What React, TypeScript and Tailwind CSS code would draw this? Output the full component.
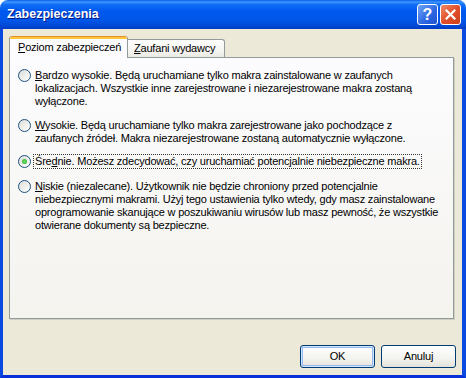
import React from "react";

type Option = {
  key: string;
  accel: [string, string, string];
  lines: string[];
  checked?: boolean;
  gap: string;
};

// first line is split as: before accel / accel letter / rest of first line
const OPTIONS: Option[] = [
  {
    key: "bardzo",
    accel: ["", "B", "ardzo wysokie. Będą uruchamiane tylko makra zainstalowane w zaufanych"],
    lines: [
      "lokalizacjach. Wszystkie inne zarejestrowane i niezarejestrowane makra zostaną",
      "wyłączone.",
    ],
    gap: "mt-0",
  },
  {
    key: "wysokie",
    accel: ["", "W", "ysokie. Będą uruchamiane tylko makra zarejestrowane jako pochodzące z"],
    lines: ["zaufanych źródeł. Makra niezarejestrowane zostaną automatycznie wyłączone."],
    gap: "mt-[11px]",
  },
  {
    key: "srednie",
    accel: ["Śre", "d", "nie. Możesz zdecydować, czy uruchamiać potencjalnie niebezpieczne makra."],
    lines: [],
    checked: true,
    gap: "mt-[10px]",
  },
  {
    key: "niskie",
    accel: ["", "N", "iskie (niezalecane). Użytkownik nie będzie chroniony przed potencjalnie"],
    lines: [
      "niebezpiecznymi makrami. Użyj tego ustawienia tylko wtedy, gdy masz zainstalowane",
      "oprogramowanie skanujące w poszukiwaniu wirusów lub masz pewność, że wszystkie",
      "otwierane dokumenty są bezpieczne.",
    ],
    gap: "mt-[12px]",
  },
];

const Radio = ({ checked }: { checked?: boolean }) => (
  <span className="flex h-[13px] w-[13px] shrink-0 items-center justify-center rounded-full border border-[#1c5180] bg-[linear-gradient(135deg,#dcdcd7,#ffffff)]">
    {checked && (
      <span className="h-[5px] w-[5px] rounded-full bg-[radial-gradient(circle,#6fe36a,#21a121)]" />
    )}
  </span>
);

const Accel = ({ children }: { children: React.ReactNode }) => (
  <span className="underline underline-offset-[1px]">{children}</span>
);

const TitleButton = ({ kind }: { kind: "help" | "close" }) => (
  <div
    className={`flex h-[21px] w-[21px] items-center justify-center rounded-[3px] border border-white ${
      kind === "help"
        ? "bg-[linear-gradient(135deg,#6fa3f7,#2c66e2_60%,#1f53cf)]"
        : "bg-[linear-gradient(135deg,#f08a68,#e2502a_50%,#cc3f18)]"
    }`}
  >
    {kind === "help" ? (
      <span className="text-[16px] font-bold leading-none text-white">?</span>
    ) : (
      <svg width="11" height="11" viewBox="0 0 11 11">
        <path d="M1.5 1.5 L9.5 9.5 M9.5 1.5 L1.5 9.5" stroke="#fff" strokeWidth="2.2" strokeLinecap="square" />
      </svg>
    )}
  </div>
);

const XpButton = ({ label, isDefault }: { label: string; isDefault?: boolean }) => (
  <button
    className={`flex h-[23px] w-[75px] items-center justify-center rounded-[3px] border border-[#003c74] bg-[linear-gradient(to_bottom,#ffffff,#f3f3ef_60%,#e3e2da)] text-[11px] text-black ${
      isDefault ? "shadow-[inset_0_0_0_1px_#cee7ff,inset_0_0_0_2px_#98b8f3]" : ""
    }`}
  >
    {label}
  </button>
);

export default function App() {
  return (
    <div className="h-[378px] w-[466px] bg-white font-['Liberation_Sans',Tahoma,sans-serif]">
      <div className="flex h-full flex-col overflow-hidden rounded-t-[8px]">
        {/* title bar */}
        <div className="flex h-[29px] shrink-0 items-center justify-between bg-[linear-gradient(to_bottom,#0a5fe8_0%,#3d95ff_7%,#0f6cf5_16%,#0058ee_40%,#0056e8_70%,#0049d6_88%,#003cc2_100%)] pl-[7px] pr-[5px]">
          <span className="text-[12.5px] font-bold text-white [text-shadow:1px_1px_0_#0a1883]">
            Zabezpieczenia
          </span>
          <div className="flex gap-[2px]">
            <TitleButton kind="help" />
            <TitleButton kind="close" />
          </div>
        </div>

        {/* client area */}
        <div className="flex flex-1 flex-col border-b-[3px] border-l-[3px] border-r-[4px] border-b-[#0831d9] border-l-[#0a4ae0] border-r-[#0a4ae0] bg-[#ece9d8] pl-[6px] pr-[8px] pt-[7px] text-[11px] tracking-[-0.2px] text-black">
          {/* tabs */}
          <div className="flex h-[21px] items-end">
            <div className="relative z-10 -mb-[1px] flex h-[22px] w-[119px] flex-col overflow-hidden rounded-t-[3px] border-x border-[#919b9c] bg-[#fcfcfe]">
              <div className="h-[1px] bg-[#e68b2c]" />
              <div className="h-[2px] bg-[#ffc73c]" />
              <div className="flex flex-1 items-center pl-[8px] pb-[2px]">
                <span className="whitespace-nowrap">
                  <Accel>P</Accel>oziom zabezpieczeń
                </span>
              </div>
            </div>
            <div className="flex h-[18px] w-[97px] items-center rounded-tr-[3px] border-r border-t border-[#919b9c] bg-[linear-gradient(to_bottom,#ffffff,#f3f3ef_70%,#ebeae3)] pl-[6px]">
              <span className="whitespace-nowrap">
                <Accel>Z</Accel>aufani wydawcy
              </span>
            </div>
          </div>

          {/* tab pane */}
          <div className="h-[262px] border border-[#919b9c] bg-[linear-gradient(to_bottom,#fcfcfe,#f4f3ee)] pl-[8px] pt-[11px] shadow-[1px_1px_0_#d0cebf] leading-[13px]">
            {OPTIONS.map((o) => (
              <div key={o.key} className={`flex gap-[4px] ${o.gap}`}>
                <Radio checked={o.checked} />
                <div className="whitespace-nowrap">
                  {o.checked ? (
                    <span className="-ml-[2px] -my-[1px] inline-block border border-dotted border-[#333] px-[1px]">
                      {o.accel[0]}
                      <Accel>{o.accel[1]}</Accel>
                      {o.accel[2]}
                    </span>
                  ) : (
                    <div>
                      {o.accel[0]}
                      <Accel>{o.accel[1]}</Accel>
                      {o.accel[2]}
                    </div>
                  )}
                  {o.lines.map((l) => (
                    <div key={l}>{l}</div>
                  ))}
                </div>
              </div>
            ))}
          </div>

          {/* buttons */}
          <div className="mt-[26px] flex justify-end gap-[6px] -mr-[2px]">
            <XpButton label="OK" isDefault />
            <XpButton label="Anuluj" />
          </div>
        </div>
      </div>
    </div>
  );
}
